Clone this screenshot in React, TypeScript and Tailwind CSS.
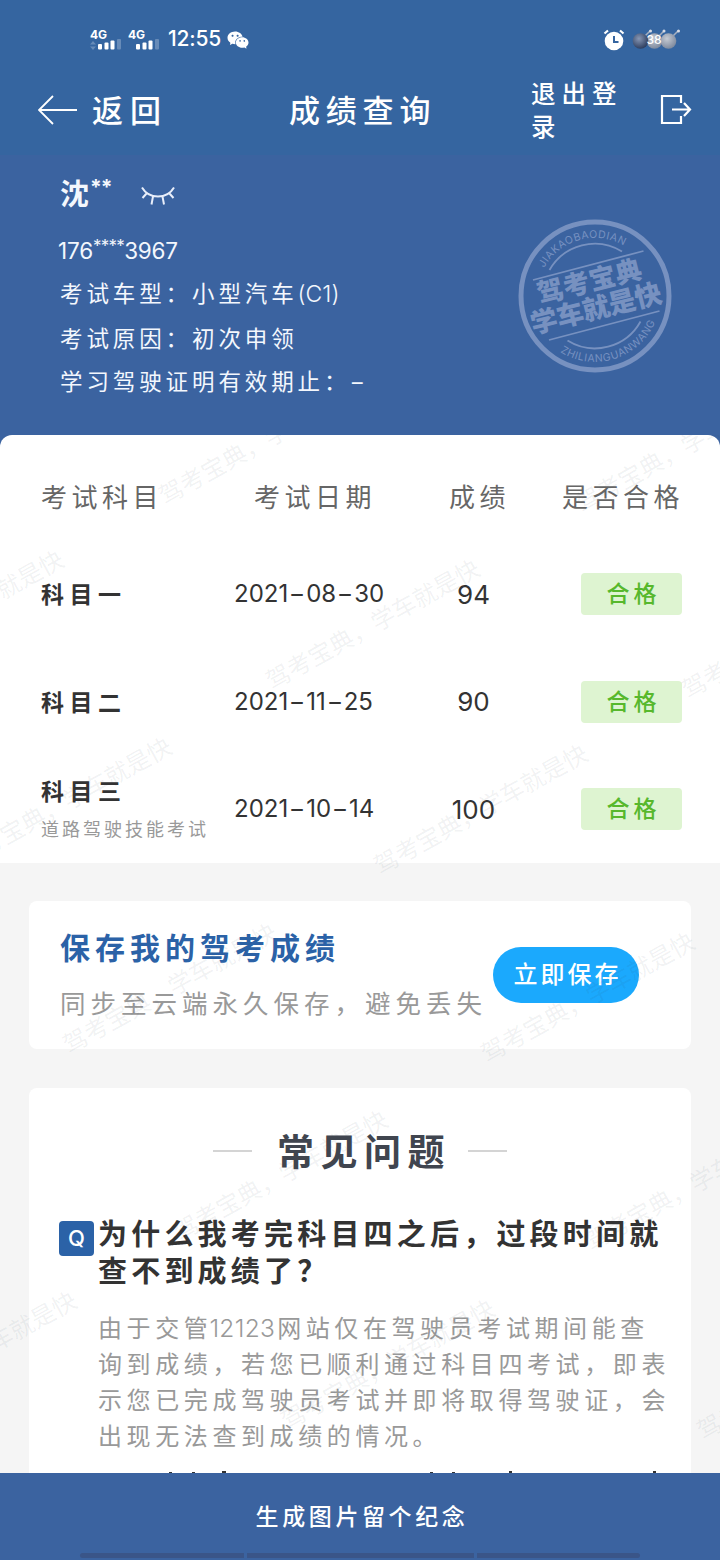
import React from "react";
import { AiFillWechat } from 'react-icons/ai';

type Row = {
    subject: string;
    note?: string;
    date: string;
    score: number;
};

const rows: Row[] = [
    { subject: '科目一', date: '2021-08-30', score: 94 },
    { subject: '科目二', date: '2021-11-25', score: 90 },
    { subject: '科目三', note: '道路驾驶技能考试', date: '2021-10-14', score: 100 },
];

// centre points of the repeated watermark, relative to the content area
const watermarks = [
    [266, 5], [683, 13], [-43, 181], [373, 190], [789, 199], [65, 368], [481, 375],
    [170, 554], [588, 563], [281, 741], [692, 751], [-30, 922], [388, 930], [804, 940],
];

const Signal = ({ data }: { data?: boolean }) => (
    <svg width="32" height="24" viewBox="0 0 32 24" fill="#fff">
        <text x="0" y="11.500" fontSize="12" fontWeight="700" fontFamily="Inter, sans-serif" textLength="17">4G</text>
        {data && <path d="M3 14l3 3.500H0zM3 23l3-3.500H0z" opacity=".25" />}
        <rect x="8" y="17" width="4" height="5.500" rx="1" />
        <rect x="14.500" y="15.500" width="4" height="7" rx="1" />
        <rect x="20.500" y="13.500" width="4" height="9" rx="1" />
        <rect x="27" y="12" width="4" height="10.500" rx="1" opacity=".25" />
    </svg>
);

const StatusBar = () => (
    <div className="flex h-[66px] items-start pl-[90px] pr-[39px] pt-[27px] text-white">
        <Signal data />
        <div className="ml-[6px]"><Signal /></div>
        <span className="ml-[8px] w-[53px] text-[21px] font-medium leading-[24px] tracking-[-0.2px]">12:55</span>
        <AiFillWechat className="ml-[5px] mt-[1px]" size={24} />
        <svg className="ml-auto mt-[2px]" width="22" height="22" viewBox="0 0 22 22" fill="none">
            <circle cx="11" cy="12" r="9.300" fill="#fff" />
            <path d="M1.500 4.500l3.500-3M20.500 4.500l-3.500-3" stroke="#fff" strokeWidth="2.200" />
            <path d="M11 7v6h4.500" stroke="#3565a0" strokeWidth="2" />
        </svg>
        <svg className="ml-[7px]" width="49" height="24" viewBox="0 0 49 24">
            <defs>
                <radialGradient id="dark" cx=".4" cy=".35" r=".65">
                    <stop offset="0" stopColor="#8797b5" />
                    <stop offset="1" stopColor="#2f3f60" />
                </radialGradient>
                <radialGradient id="light" cx=".4" cy=".35" r=".65">
                    <stop offset="0" stopColor="#c5cad3" />
                    <stop offset="1" stopColor="#7f8b9f" />
                </radialGradient>
            </defs>
            <path d="M13 9l5-5M27 9l5-5M41 9l5-5" stroke="#a7b0c0" strokeWidth="1.500" />
            <circle cx="22.500" cy="14" r="7.800" fill="url(#light)" />
            <circle cx="8.500" cy="14" r="7.800" fill="url(#dark)" />
            <circle cx="36.500" cy="14" r="7.800" fill="url(#light)" />
            <g fill="#d7dce5"><circle cx="18.500" cy="4" r="1.500" /><circle cx="32" cy="4" r="1.500" /><circle cx="46.500" cy="4" r="1.500" /></g>
            <text x="14.500" y="16.500" fontSize="12" fontWeight="500" fill="#fff" fontFamily="Inter, sans-serif" textLength="15">38</text>
        </svg>
    </div>
);

const NavBar = () => (
    <div className="flex h-[87px] items-center pl-[38px] text-white">
        <svg width="40" height="30" viewBox="0 0 40 30" fill="none" stroke="#fff" strokeWidth="1.800">
            <path d="M15 1L1 15l14 14M1 15h38" />
        </svg>
        <span className="ml-[14px] w-[197px] pt-[2px] text-[31px] font-medium leading-[36px] tracking-[7px]">返回</span>
        <span className="w-[242px] pt-[2px] text-[31px] font-medium leading-[36px] tracking-[5.800px]">成绩查询</span>
        <span className="w-[96px] pt-[2px] text-[24.500px] font-medium leading-[33px] tracking-[6px]">退出登录</span>
        <svg className="ml-[33px]" width="32" height="32" viewBox="0 0 32 32" fill="none" stroke="#fff" strokeWidth="2.200">
            <path d="M21 9V2H2v27h19v-7M12 15.500h18M24 9l6 6.500-6 6.500" />
        </svg>
    </div>
);

const Stamp = () => (
    <svg className="mr-[47px] mt-[63px] shrink-0" width="156" height="156" viewBox="-78 -78 156 156" fill="none" stroke="#7791c0">
        <defs>
            <path id="topArc" d="M-51 -28A58 58 0 0 1 31 -49" />
            <path id="bottomArc" d="M-35 56A66 66 0 0 0 59 29" />
        </defs>
        <circle r="74" strokeWidth="5" />
        <path d="M-45.500 -26A52 52 0 0 1 27 -44.500M-27.500 44.500A52 52 0 0 0 45.500 25.500" strokeWidth="1.800" />
        <path d="M-62 -16L48.500 -45M-46 44L64.500 15" strokeWidth="1.800" />
        <g fill="#7791c0" stroke="none" className="font-['Noto_Sans_CJK_SC',sans-serif]">
            <g transform="rotate(-14)" fontWeight="900" textAnchor="middle">
                <text x="-2" y="-6" fontSize="26.500" textLength="107">驾考宝典</text>
                <text x="-2" y="22" fontSize="27" textLength="134">学车就是快</text>
            </g>
            <g fontSize="10.500" fontFamily="Inter, sans-serif">
                <text><textPath href="#topArc" textLength="92">JIAKAOBAODIAN</textPath></text>
                <text><textPath href="#bottomArc" textLength="113">ZHILIANGUANWANG</textPath></text>
            </g>
        </g>
    </svg>
);

const Profile = () => (
    <div className="flex h-[290px] items-start justify-between bg-[#3b63a0] pl-[60px] text-[#f3f7fd]">
        <div className="pt-[18px] text-[22.500px] leading-[43.400px] tracking-[3.900px]">
            <div className="flex h-[56px] items-start">
                <span className="text-[29px] font-bold tracking-normal">沈</span>
                <span className="pl-[1px] text-[21px] font-bold leading-[29px] tracking-[-1px]">**</span>
                <svg className="ml-[28px] mt-[13px]" width="36" height="21" viewBox="0 0 36 21" fill="none" stroke="#e8eefa" strokeWidth="2">
                    <path d="M2 1.500C9 13.500 27 13.500 34 1.500M6.500 7.500l-4 4.500M13 10.500l-1.500 8M22.500 10.500l1.500 8M29.500 7.500l4 4.500" />
                </svg>
            </div>
            <div className="ml-[-2px] flex h-[43.400px] text-[22.500px] tracking-[-0.200px]">
                176<span className="text-[17px] leading-[34px] tracking-[-0.700px]">****</span>3967
            </div>
            <div>考试车型：小型汽车<span className="text-[23px] font-light tracking-normal">(C1)</span></div>
            <div>考试原因：初次申领</div>
            <div>学习驾驶证明有效期止：<span className="ml-[3px] inline-block scale-x-150">-</span></div>
        </div>
        <Stamp />
    </div>
);

const DateText = ({ value }: { value: string }) => (
    <div className="flex w-[187px] text-[24px]">
        {value.split('-').map((part, i) => (
            <React.Fragment key={i}>
                {i > 0 && <span className="w-[18px] scale-x-150 text-center">-</span>}
                <span>{part}</span>
            </React.Fragment>
        ))}
    </div>
);

const ScoreTable = () => (
    <div className="rounded-t-[12px] bg-white pl-[41px] pr-[38px]">
        <div className="flex h-[105px] items-center pt-[21px] text-[26px] leading-[36px] tracking-[4.500px] text-[#666]">
            <div className="w-[213px]">考试科目</div>
            <div className="w-[195px]">考试日期</div>
            <div>成绩</div>
            <div className="ml-auto mr-[-2px]">是否合格</div>
        </div>
        {rows.map((row) => (
            <div key={row.subject} className="flex h-[107.500px] items-center pt-[1px] text-[#333]">
                <div className="w-[193px] pt-[3px]">
                    <div className="text-[23px] font-bold leading-[37px] tracking-[5.500px]">{row.subject}</div>
                    {row.note && <div className="whitespace-nowrap text-[18px] leading-[37px] tracking-[3px] text-[#999]">{row.note}</div>}
                </div>
                <DateText value={row.date} />
                <div className="w-[105px] text-center text-[26px]">{row.score}</div>
                <div className="ml-auto flex h-[42px] w-[101px] items-center justify-center rounded-[4px] bg-[#def4d1] pl-[4px] text-[23px] font-medium tracking-[4px] text-[#57b82c]">合格</div>
            </div>
        ))}
    </div>
);

const SaveCard = () => (
    <div className="mx-[29px] mt-[38px] flex h-[148px] items-center rounded-[8px] bg-white pl-[31px] pr-[52px]">
        <div className="whitespace-nowrap pt-[3px]">
            <div className="text-[30px] font-bold leading-[55px] tracking-[5px] text-[#2b62a7]">保存我的驾考成绩</div>
            <div className="text-[25.500px] leading-[55px] tracking-[5px] text-[#999]">同步至云端永久保存，避免丢失</div>
        </div>
        <button className="ml-auto h-[56px] w-[146px] shrink-0 rounded-full bg-[#1ba9fd] pl-[3px] text-[24px] font-medium tracking-[3px] text-white">立即保存</button>
    </div>
);

const Faq = () => (
    <div className="mx-[29px] mt-[39px] flex h-[385px] flex-col rounded-t-[8px] bg-white pl-[30px]">
        <div className="flex h-[127px] items-center justify-center pr-[30px]">
            <div className="h-[2px] w-[39px] bg-[#d4d4d4]" />
            <h2 className="ml-[25px] mr-[17px] pt-[3px] text-[37px] font-bold leading-[50px] tracking-[6.500px] text-[#40454f]">常见问题</h2>
            <div className="h-[2px] w-[39px] bg-[#d4d4d4]" />
        </div>
        <div className="flex items-start">
            <div className="mt-[6px] flex h-[35px] w-[35px] items-center justify-center rounded-[4px] bg-[#2b62a7] text-[22px] font-medium text-white">Q</div>
            <div className="ml-[4px] whitespace-nowrap pt-[1px]">
                <div className="text-[29px] font-bold leading-[37px] tracking-[4.200px] text-[#333]">
                    为什么我考完科目四之后，过段时间就<br />查不到成绩了？
                </div>
                <div className="mt-[20px] text-[24px] leading-[36px] tracking-[4.600px] text-[#999]">
                    由于交管<span className="ml-[-3px] mr-[2px] text-[24.500px] font-light tracking-[0.300px]">12123</span>网站仅在驾驶员考试期间能查<br />
                    询到成绩，若您已顺利通过科目四考试，即表<br />
                    示您已完成驾驶员考试并即将取得驾驶证，会<br />
                    出现无法查到成绩的情况。
                </div>
            </div>
        </div>
        {/* top edge of the next question, the footer hides the rest */}
        <svg className="mt-auto" width="610" height="2" viewBox="0 0 610 2" fill="#333">
            <path d="M110 1h3v1h-3zM133 1h3v1h-3zM163 0h4v2h-4zM371 1h3v1h-3zM393 1h3v1h-3zM450 0h3v2h-3zM594 0h3v2h-3z" />
        </svg>
    </div>
);

const Watermark = () => (
    <div className="pointer-events-none absolute inset-0 overflow-hidden">
        {watermarks.map(([x, y]) => (
            <span
                key={`${x},${y}`}
                className="absolute -translate-x-1/2 -translate-y-1/2 rotate-[-29deg] whitespace-nowrap text-[24px] leading-none text-[#33475b]/[0.075]"
                style={{ left: x, top: y }}
            >
                驾考宝典，学车就是快
            </span>
        ))}
    </div>
);

const App = () => {
    return (
        <div className="flex h-[1560px] w-[720px] flex-col overflow-hidden bg-[#3b63a0] font-['Inter','Noto_Sans_CJK_SC',sans-serif]">
            <div className="h-[155px] bg-[#3565a0]">
                <StatusBar />
                <NavBar />
            </div>
            <div className="h-[280px]">
                <Profile />
            </div>
            <div className="relative h-[1038px] overflow-hidden">
                <div className="bg-[#3b63a0]">
                    <ScoreTable />
                </div>
                <div className="h-[611px] overflow-hidden bg-[#f5f5f5]">
                    <SaveCard />
                    <Faq />
                </div>
                <Watermark />
            </div>
            <div className="flex h-[87px] flex-col items-center justify-between">
                <div className="pl-[4px] pt-[25px] text-[23px] font-medium leading-[38px] tracking-[3.600px] text-white">生成图片留个纪念</div>
                <div className="mb-[2px] flex gap-[3px]">
                    <div className="h-[5px] w-[164px] rounded-l-full bg-[#3a5588]" />
                    <div className="h-[5px] w-[227px] bg-[#3a5588]" />
                    <div className="h-[5px] w-[163px] rounded-r-full bg-[#3a5588]" />
                </div>
            </div>
        </div>
    );
};

export default App;
